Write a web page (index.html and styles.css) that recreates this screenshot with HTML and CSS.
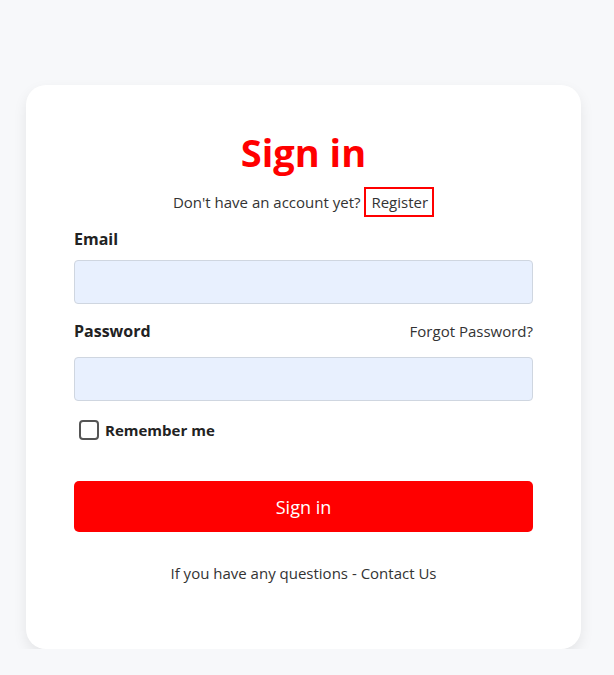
FILE: index.html
```html
<!DOCTYPE html>
<html lang="en">
<head>
    <meta charset="UTF-8">
    <meta name="viewport" content="width=device-width, initial-scale=1.0">
    <title>Sign in</title>
    <link rel="stylesheet" href="styles.css">
</head>
<body>
    <div class="login-card">
        <h1 class="title">Sign in</h1>
        <p class="subtitle">Don't have an account yet? <a href="#" class="register">Register</a></p>
        <form class="login-form">
            <div class="field">
                <label for="email" class="label">Email</label>
                <input type="email" id="email" class="input">
            </div>
            <div class="field">
                <div class="label-row">
                    <label for="password" class="label">Password</label>
                    <a href="#" class="forgot">Forgot Password?</a>
                </div>
                <input type="password" id="password" class="input">
            </div>
            <label class="remember">
                <span class="checkbox"></span>
                Remember me
            </label>
            <button type="submit" class="submit">Sign in</button>
        </form>
        <p class="footer">If you have any questions - <a href="#">Contact Us</a></p>
    </div>
</body>
</html>
```

FILE: styles.css
```css
body {
    margin: 0;
    background-color: #f7f8fa;
    font-family: "Open Sans", Arial, sans-serif;
    color: #333;
}
.login-card {
    width: 555px;
    box-sizing: border-box;
    margin: 85px 0 0 26px;
    padding: 44px 48px 66px;
    background-color: #fff;
    border-radius: 20px;
    box-shadow: 0 6px 14px rgba(0, 0, 0, 0.08);
}
.title {
    margin: 0;
    text-align: center;
    color: #ff0000;
    font-size: 38px;
    font-weight: 700;
    line-height: 46px;
}
.subtitle {
    margin: 12px 0 0;
    text-align: center;
    font-size: 15px;
    line-height: 28px;
}
.register {
    display: inline-block;
    color: #333;
    text-decoration: none;
    border: 2px solid #ff0000;
    padding: 1px 4px 1px 5px;
    line-height: 24px;
}
.login-form {
    margin-top: 12px;
}
.field {
    margin-bottom: 17px;
}
.label {
    display: block;
    font-size: 16px;
    font-weight: 700;
    color: #222;
    line-height: 20px;
    margin-bottom: 11px;
}
.label-row {
    display: flex;
    justify-content: space-between;
    align-items: baseline;
    margin-bottom: 5px;
}
.forgot {
    color: #333;
    text-decoration: none;
    font-size: 15px;
}
.input {
    display: block;
    width: 100%;
    box-sizing: border-box;
    height: 44px;
    border: 1px solid #cfd6e0;
    border-radius: 4px;
    background-color: #e8f0fe;
}
.remember {
    display: flex;
    align-items: center;
    gap: 6px;
    padding-top: 2px;
    margin-left: 5px;
    font-size: 15px;
    font-weight: 700;
    color: #222;
}
.checkbox {
    width: 16px;
    height: 16px;
    border: 2px solid #555;
    border-radius: 4px;
}
.submit {
    display: block;
    width: 100%;
    height: 51px;
    margin-top: 41px;
    border: none;
    border-radius: 5px;
    background-color: #ff0000;
    color: #fff;
    font-family: inherit;
    font-size: 18px;
    cursor: pointer;
}
.footer {
    margin: 31px 0 0;
    text-align: center;
    font-size: 15px;
}
.footer a {
    color: #333;
    text-decoration: none;
}
```
